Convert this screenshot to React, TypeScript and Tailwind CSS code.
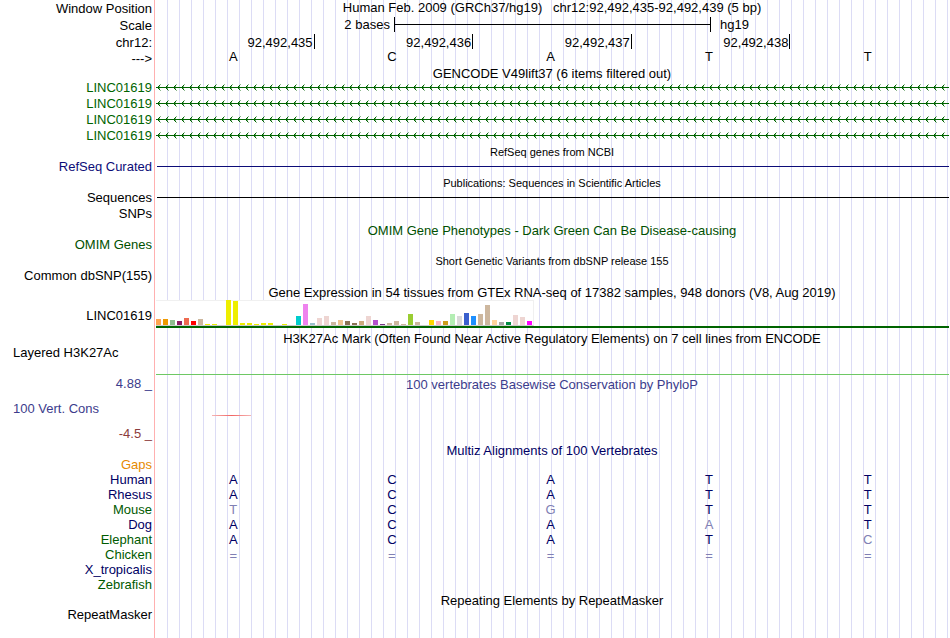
import { ReactNode } from "react"
import { clsx } from "clsx"

type RowProps = {
  label?: string
  height?: string
  labelClass?: string
  children?: ReactNode
}

const Row = ({ label, height = "h-[15px]", labelClass, children }: RowProps) => {
  return (
    <div className={clsx("flex", height)}>
      <div className={clsx("w-[155px] shrink-0 border-r border-[#ffb0b0] pr-0.5 text-right whitespace-pre", labelClass)}>
        {label}
      </div>
      <div className="ml-px min-w-0 flex-1 bg-[repeating-linear-gradient(to_right,transparent_0_11px,#dcdcf5_11px_12px)]">
        {children}
      </div>
    </div>
  )
}

const Title = ({ className, children }: { className?: string; children: ReactNode }) => (
  <h2 className={clsx("pr-px text-center whitespace-pre", className)}>{children}</h2>
)

const Bases = ({ bases, className }: { bases: string; className?: string }) => (
  <div className={clsx("-ml-0.5 grid grid-cols-5 pr-0.5 text-center", className)}>
    {bases.split("").map((base, i) => (
      // lower case marks a base that differs from human
      <span key={i} className={clsx(/[a-z=]/.test(base) && "text-[#8080b4]", base === "=" && "pt-px")}>
        {base.toUpperCase()}
      </span>
    ))}
  </div>
)

const Intron = () => (
  <svg className="block h-[15px] w-full" aria-hidden="true">
    <defs>
      <pattern id="strand" width="8" height="15" patternUnits="userSpaceOnUse">
        <path d="M0 7.5H8" stroke="#006400" strokeWidth="1" />
        <path d="M2 6h1v1h-1zM2 8h1v1h-1zM3 5h1v1h-1zM3 9h1v1h-1z" fill="#006400" />
        <path d="M3 6h1v1h-1zM3 8h1v1h-1zM4 4h1v1h-1zM4 10h1v1h-1z" fill="#006400" fillOpacity="0.45" />
      </pattern>
    </defs>
    <rect width="100%" height="15" fill="url(#strand)" />
  </svg>
)

const positions = ["92,492,435", "92,492,436", "92,492,437", "92,492,438"]

const transcripts = ["LINC01619", "LINC01619", "LINC01619", "LINC01619"]

const tissues: [number, string][] = [
  [6, "#ffa54f"], [6, "#ee9a00"], [5, "#8fbc8f"], [4, "#8b1c62"], [7, "#ee6a50"], [4, "#ff0000"],
  [6, "#cdb79e"], [1, "#eeee00"], [1, "#eeee00"], [0, "#eeee00"], [25, "#eeee00"], [24, "#eeee00"],
  [2, "#eeee00"], [2, "#eeee00"], [1, "#eeee00"], [2, "#eeee00"], [2, "#eeee00"], [0, "#eeee00"],
  [1, "#eeee00"], [0, "#eeee00"], [9, "#00cdcd"], [21, "#ee82ee"], [2, "#9ac0cd"], [7, "#eed5d2"],
  [9, "#eed5d2"], [3, "#cdb79e"], [5, "#eec591"], [4, "#8b7355"], [2, "#8b7355"], [4, "#cdaa7d"],
  [9, "#eed5d2"], [5, "#b452cd"], [1, "#7a378b"], [2, "#cdb79e"], [4, "#cdb79e"], [1, "#cdb79e"],
  [11, "#9acd32"], [3, "#cdb79e"], [0, "#7a67ee"], [5, "#ffd700"], [4, "#ffb6c1"], [4, "#cd9b1d"],
  [11, "#b4eeb4"], [9, "#d9d9d9"], [12, "#3a5fcd"], [9, "#1e90ff"], [11, "#cdb79e"], [20, "#cdb79e"],
  [5, "#ffd39b"], [3, "#a6a6a6"], [3, "#008b45"], [10, "#eed5d2"], [8, "#eed5d2"], [4, "#ff00ff"],
]

const species = [
  { name: "Gaps", color: "text-[#e68a00]", bases: "" },
  { name: "Human", color: "text-[#000064]", bases: "ACATT" },
  { name: "Rhesus", color: "text-[#000064]", bases: "ACATT" },
  { name: "Mouse", color: "text-[#005a00]", bases: "tCgTT" },
  { name: "Dog", color: "text-[#000064]", bases: "ACAaT" },
  { name: "Elephant", color: "text-[#005a00]", bases: "ACATc" },
  { name: "Chicken", color: "text-[#005a00]", bases: "=====" },
  { name: "X_tropicalis", color: "text-[#000064]", bases: "" },
  { name: "Zebrafish", color: "text-[#005a00]", bases: "" },
]

const App = () => {
  return (
    <main className="flex min-h-screen flex-col overflow-hidden bg-white pr-px font-['Liberation_Sans',Arial,sans-serif] text-[13px] leading-[15px] text-black">
      {/* Position ruler */}
      <Row label="Window Position" height="h-4" labelClass="pt-px">
        <Title>{"Human Feb. 2009 (GRCh37/hg19)   chr12:92,492,435-92,492,439 (5 bp)"}</Title>
      </Row>
      <Row label="Scale" height="h-[18px]" labelClass="pt-0.5">
        <div className="grid grid-cols-[3fr_4fr_3fr] pt-px">
          <span className="pr-1 text-right">2 bases</span>
          <div className="flex h-[15px] items-center border-x border-black">
            <div className="h-px w-full bg-black" />
          </div>
          <span className="pl-[9px]">hg19</span>
        </div>
      </Row>
      <Row label="chr12:" labelClass="pt-px">
        <div className="grid grid-cols-5">
          {positions.map((position) => (
            <span key={position} className="h-[15px] border-r border-black pt-px pr-px text-right">{position}</span>
          ))}
        </div>
      </Row>
      <Row label="--->" height="h-[17px]" labelClass="pt-0.5">
        <Bases bases="ACATT" />
      </Row>

      {/* Genes */}
      <Row height="h-[14px]">
        <Title>GENCODE V49lift37 (6 items filtered out)</Title>
      </Row>
      {transcripts.map((name, i) => (
        <Row key={i} label={name} height="h-4" labelClass="text-[#006400]">
          <Intron />
        </Row>
      ))}
      <Row>
        <Title className="pt-px text-[11px]">RefSeq genes from NCBI</Title>
      </Row>
      <Row label="RefSeq Curated" labelClass="text-[#0c0c78]">
        <div className="flex h-[15px] items-center pl-px">
          <div className="h-px w-full bg-[#0c0c78]" />
        </div>
      </Row>
      <Row height="h-4">
        <Title className="pt-0.5 text-[11px]">Publications: Sequences in Scientific Articles</Title>
      </Row>
      <Row label="Sequences" height="h-4">
        <div className="flex h-[15px] items-center pl-px">
          <div className="h-px w-full bg-black" />
        </div>
      </Row>
      <Row label="SNPs" height="h-[17px]" />

      {/* Variants */}
      <Row height="h-[14px]">
        <Title className="text-[#005000]">OMIM Gene Phenotypes - Dark Green Can Be Disease-causing</Title>
      </Row>
      <Row label="OMIM Genes" labelClass="text-[#005000]" />
      <Row height="h-4">
        <Title className="pt-0.5 text-[11px]">Short Genetic Variants from dbSNP release 155</Title>
      </Row>
      <Row label="Common dbSNP(155)" height="h-[17px]" />

      {/* Expression */}
      <Row>
        <Title>Gene Expression in 54 tissues from GTEx RNA-seq of 17382 samples, 948 donors (V8, Aug 2019)</Title>
      </Row>
      <Row label="LINC01619" height="h-[31px]" labelClass="pt-2">
        <div className="flex h-[26px] w-[378px] items-end gap-0.5 border-t border-r border-b border-t-[#f0f0f0] border-r-[#f0f0f0] border-b-[#cccccc] bg-white">
          {tissues.map(([height, color], i) => (
            <div key={i} className="w-[5px] shrink-0" style={{ height, backgroundColor: color }} />
          ))}
        </div>
        <div className="h-0.5 bg-[#006400]" />
      </Row>

      {/* Regulation */}
      <Row height="h-[14px]">
        <Title>H3K27Ac Mark (Often Found Near Active Regulatory Elements) on 7 cell lines from ENCODE</Title>
      </Row>
      <Row label="Layered H3K27Ac" height="h-[31px]" labelClass="pl-[13px] text-left!">
        <div className="h-[30px] border-b border-[#6ec864]" />
      </Row>

      {/* Conservation */}
      <Row label="4.88 _" height="h-[25px]" labelClass="text-[#3c3c8c]">
        <Title className="pt-px text-[#3c3c8c]">100 vertebrates Basewise Conservation by PhyloP</Title>
      </Row>
      <Row label="100 Vert. Cons" height="h-[25px]" labelClass="pl-[13px] text-left! text-[#3c3c8c]">
        <div className="flex h-[15px] items-end pl-14">
          <div className="h-px w-[39px] bg-linear-to-r from-[#f5b4b4] via-[#f06464] to-[#f5b4b4]" />
        </div>
      </Row>
      <Row label="-4.5 _" height="h-[17px]" labelClass="text-[#8c3c3c]" />
      <Row height="h-[14px]">
        <Title className="text-[#000064]">Multiz Alignments of 100 Vertebrates</Title>
      </Row>
      {species.map(({ name, color, bases }) => (
        <Row key={name} label={name} labelClass={color}>
          <Bases bases={bases} className="text-[#000064]" />
        </Row>
      ))}

      {/* Repeats */}
      <Row>
        <Title className="pt-px">Repeating Elements by RepeatMasker</Title>
      </Row>
      <Row label="RepeatMasker" height="min-h-[31px] flex-1" />
    </main>
  )
}

export default App
